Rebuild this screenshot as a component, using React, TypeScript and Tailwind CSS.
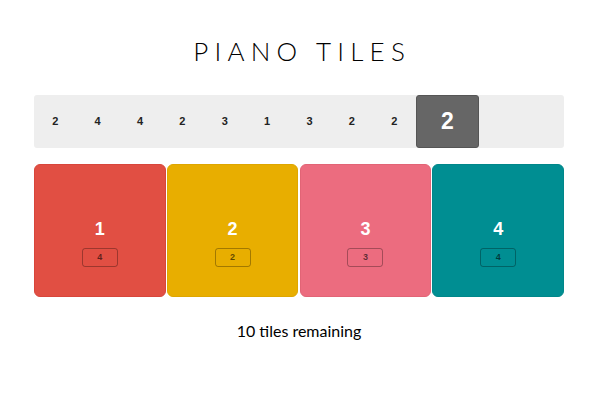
import React from "react";

const seq = [2, 4, 4, 2, 3, 1, 3, 2, 2];
const tiles = [
  { n: 1, badge: 4, cls: "bg-[#e14f43] border-[#d8463b]" },
  { n: 2, badge: 2, cls: "bg-[#e8ae00] border-[#dea600]" },
  { n: 3, badge: 3, cls: "bg-[#ec6c7f] border-[#e26476]" },
  { n: 4, badge: 4, cls: "bg-[#008e92] border-[#00878a]" },
];

export default function App() {
  return (
    <div className="w-[600px] h-[400px] bg-white pl-[34px]">
      <div className="w-[530px] flex flex-col items-center font-['Liberation_Sans',Arial,sans-serif]">
        <h1 className="mt-[36px] h-[30px] text-[26px] leading-[30px] font-light tracking-[0.24em] pl-[0.24em] text-black font-['Lato','Open_Sans',sans-serif]">
          PIANO TILES
        </h1>
        <div className="mt-[29px] w-full h-[53px] bg-[#eeeeee] rounded-[3px] flex items-stretch">
          {seq.map((v, i) => (
            <div
              key={i}
              className="w-[42.4px] flex items-center justify-center text-[11px] font-bold text-[#222]"
            >
              {v}
            </div>
          ))}
          <div className="w-[63.6px] bg-[#666666] border border-[#555555] rounded-[3px] flex items-center justify-center text-[23px] font-bold text-white">
            2
          </div>
        </div>
        <div className="mt-[16px] w-full grid grid-cols-4 gap-[1.3px]">
          {tiles.map((t) => (
            <div
              key={t.n}
              className={`h-[133px] rounded-[6px] border ${t.cls} flex flex-col items-center`}
            >
              <div className="mt-[51px] h-[26px] leading-[26px] text-[18px] font-bold text-white">
                {t.n}
              </div>
              <div className="mt-[6px] w-[36px] h-[19px] rounded-[3px] border border-black/30 flex items-center justify-center text-[9px] font-bold text-black/60">
                {t.badge}
              </div>
            </div>
          ))}
        </div>
        <div className="mt-[24px] text-[16px] leading-[20px] font-normal text-black font-['Lato','Open_Sans',sans-serif]">
          10 tiles remaining
        </div>
      </div>
    </div>
  );
}
